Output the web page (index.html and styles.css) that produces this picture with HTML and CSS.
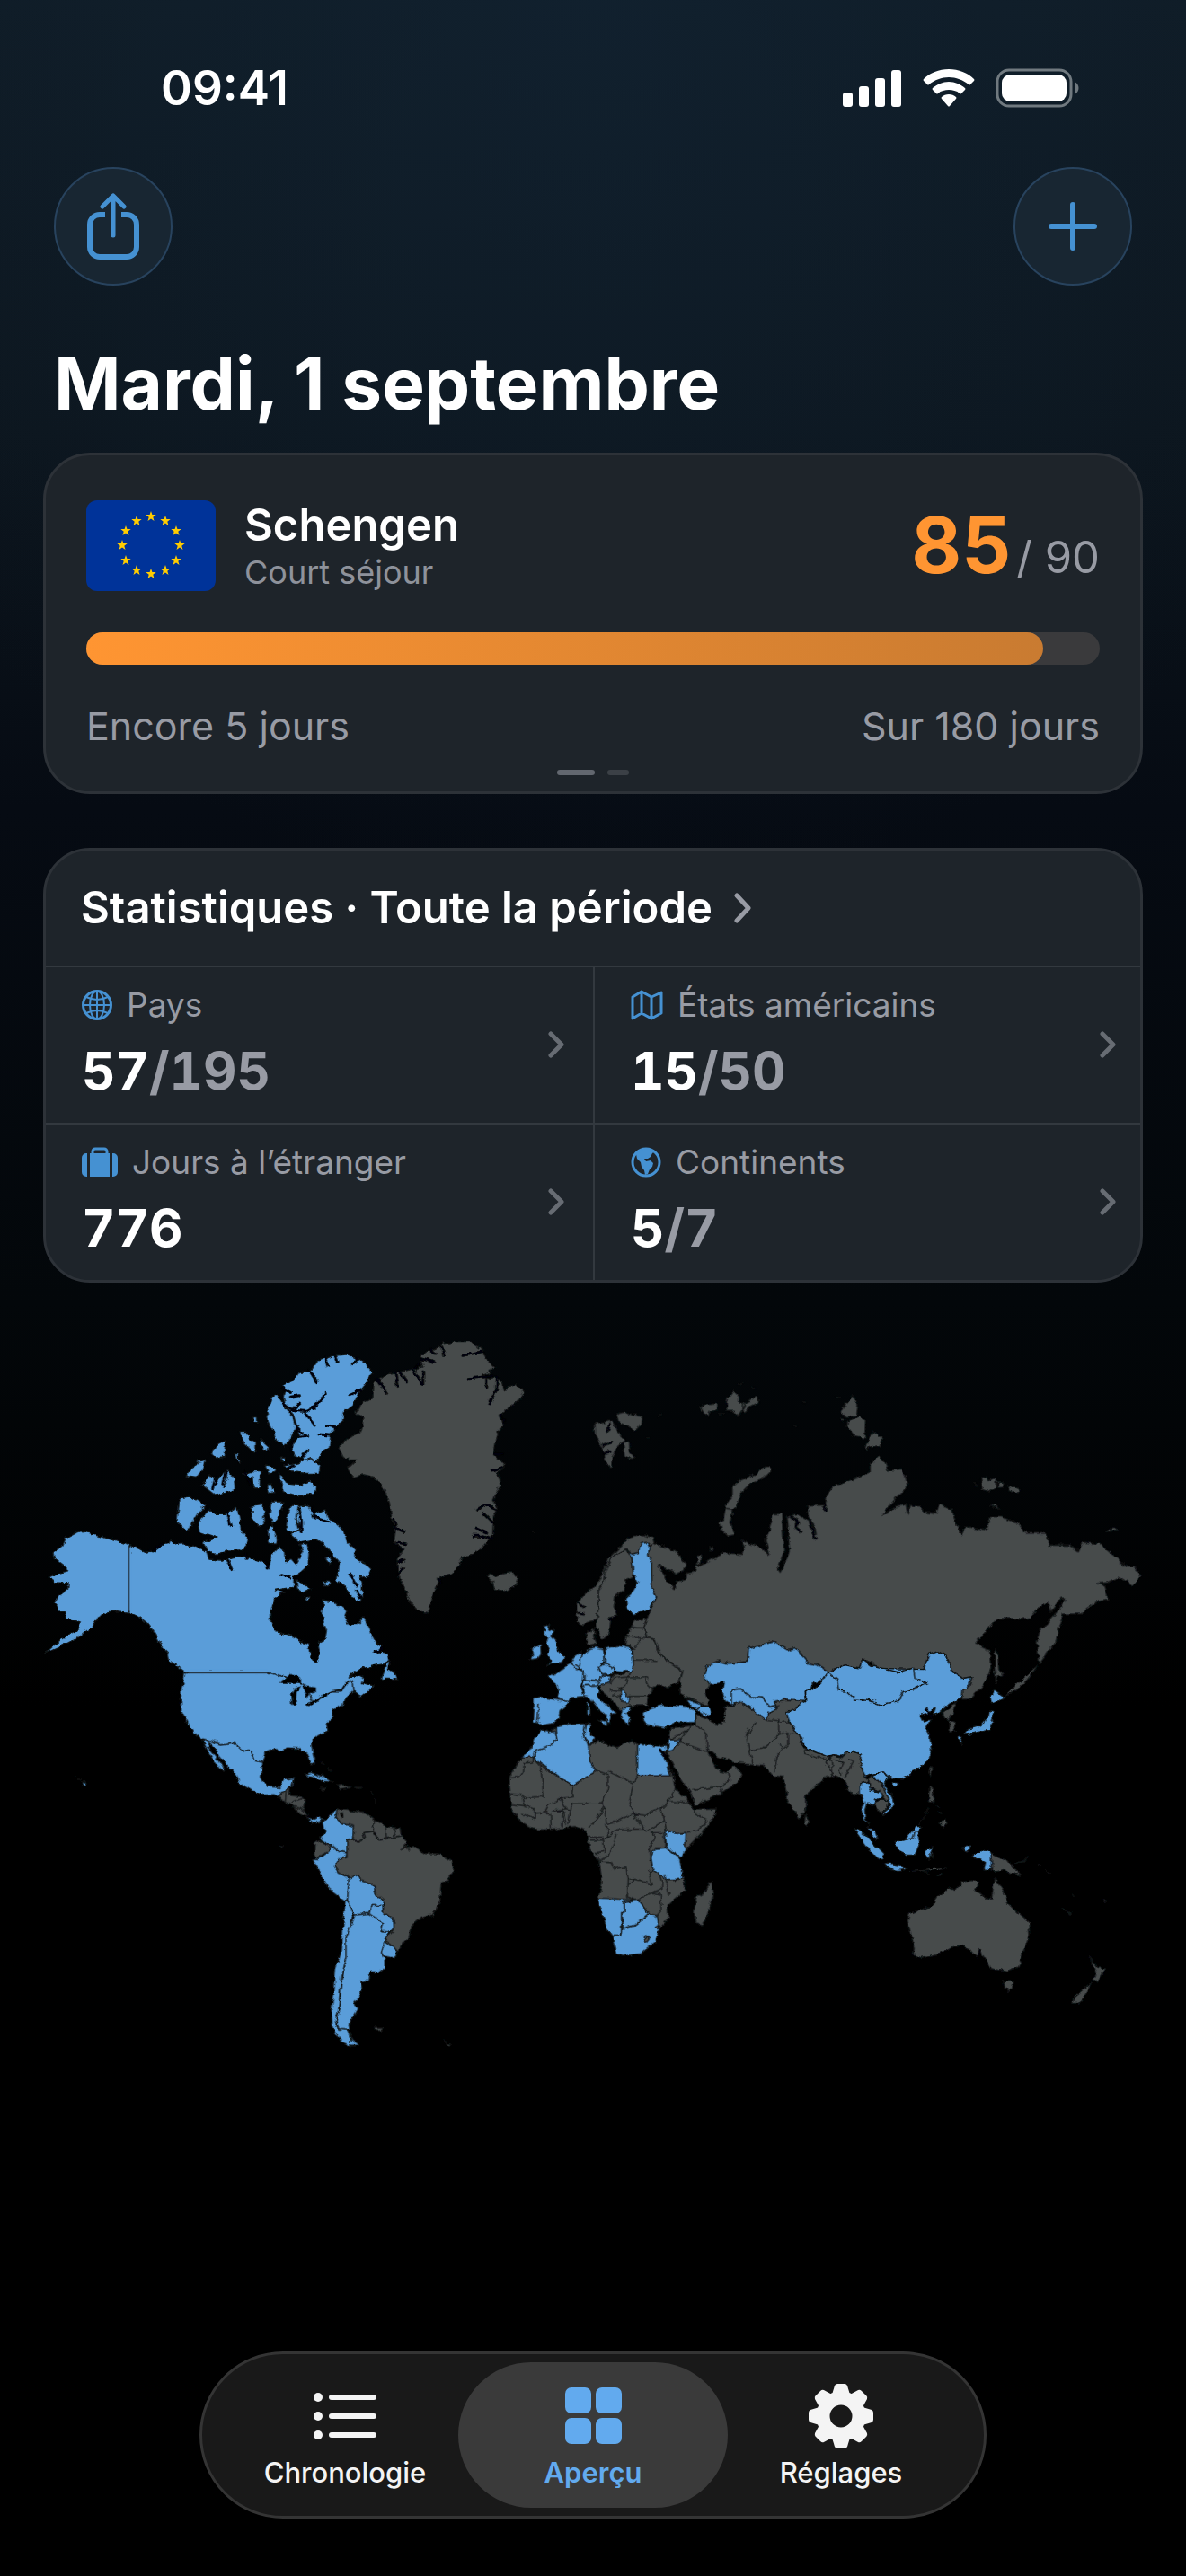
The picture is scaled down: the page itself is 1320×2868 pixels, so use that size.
FILE: index.html
```html
<!DOCTYPE html>
<html lang="fr">
<head>
  <meta charset="UTF-8" />
  <meta name="viewport" content="width=device-width, initial-scale=1.0" />
  <title>Aperçu</title>
  <link rel="stylesheet" href="styles.css">
</head>
<body>
  <div class="status-bar">
    <span class="clock">09:41</span>
    <div class="status-icons">
      <svg width="66" height="42" viewBox="0 0 66 42" fill="#fff" aria-hidden="true">
        <rect x="0" y="26" width="11" height="16" rx="3"/>
        <rect x="18" y="19" width="11" height="23" rx="3"/>
        <rect x="36" y="10" width="11" height="32" rx="3"/>
        <rect x="54" y="1" width="11" height="41" rx="3"/>
      </svg>
      <svg width="58" height="42" viewBox="0 0 58 42" fill="#fff" aria-hidden="true">
        <path d="M29 0C18 0 8 4 1 11q-1 1 0 2l4 4q1 1 2 0C13 12 21 9 29 9s16 3 22 8q1 1 2 0l4-4q1-1 0-2C50 4 40 0 29 0z"/>
        <path d="M29 14c-7 0-13 3-18 7q-1 1 0 2l4 4q1 1 2 0c3-3 8-4 12-4s9 1 12 4q1 1 2 0l4-4q1-1 0-2c-5-4-11-7-18-7z"/>
        <path d="M29 28c-3 0-6 1-8 3q-1 1 0 2l7 8q1 1 2 0l7-8q1-1 0-2c-2-2-5-3-8-3z"/>
      </svg>
      <svg width="94" height="44" viewBox="0 0 94 44" aria-hidden="true">
        <rect x="2" y="2" width="82" height="40" rx="13" fill="none" stroke="#70797f" stroke-width="3"/>
        <rect x="7" y="7" width="72" height="30" rx="9" fill="#fff"/>
        <path d="M88 15c6 3 6 11 0 14z" fill="#70797f"/>
      </svg>
    </div>
  </div>

  <div class="toolbar">
    <button class="btn-round" type="button" aria-label="Partager">
      <svg width="60" height="76" viewBox="0 0 60 76" fill="none" stroke="#4591d2" stroke-width="6" stroke-linecap="round" stroke-linejoin="round">
        <path d="M21 25h-6a11 11 0 0 0-11 11v25a11 11 0 0 0 11 11h30a11 11 0 0 0 11-11V36a11 11 0 0 0-11-11h-6" stroke-linecap="butt"/>
        <path d="M30 48V5M18 16L30 4l12 12" stroke-width="5"/>
      </svg>
    </button>
    <button class="btn-round" type="button" aria-label="Ajouter">
      <svg width="54" height="54" viewBox="0 0 54 54" stroke="#4591d2" stroke-width="6" stroke-linecap="round">
        <path d="M27 3v48M3 27h48"/>
      </svg>
    </button>
  </div>

  <h1>Mardi, 1 septembre</h1>

  <section class="card zone">
    <div class="zone-head">
      <svg class="flag" viewBox="0 0 144 101" aria-hidden="true">
        <defs>
          <path id="star" d="M0-6L1.4-1.9 5.7-1.9 2.3 .7 3.5 4.9 0 2.4-3.5 4.9-2.3 .7-5.7-1.9-1.4-1.9z"/>
        </defs>
        <rect width="144" height="101" fill="#003399"/>
        <g fill="#ffcc00">
          <use href="#star" x="72" y="18"/>
          <use href="#star" x="88" y="23"/>
          <use href="#star" x="100" y="34"/>
          <use href="#star" x="104" y="50"/>
          <use href="#star" x="100" y="67"/>
          <use href="#star" x="88" y="78"/>
          <use href="#star" x="72" y="82"/>
          <use href="#star" x="56" y="78"/>
          <use href="#star" x="44" y="67"/>
          <use href="#star" x="40" y="50"/>
          <use href="#star" x="44" y="34"/>
          <use href="#star" x="56" y="23"/>
        </g>
      </svg>
      <div class="zone-name">
        <h2>Schengen</h2>
        <p>Court séjour</p>
      </div>
      <div class="zone-count"><strong>85</strong><span>/ 90</span></div>
    </div>
    <div class="progress" role="progressbar" aria-valuenow="85" aria-valuemin="0" aria-valuemax="90" aria-label="Jours utilisés">
      <div class="progress-fill" style="width: 94.4%"></div>
    </div>
    <div class="zone-foot">
      <span>Encore 5 jours</span>
      <span>Sur 180 jours</span>
    </div>
    <div class="pager"><i class="on"></i><i></i></div>
  </section>

  <section class="card stats">
    <a class="stats-head" href="#stats">
      <h2>Statistiques · Toute la période</h2>
      <svg width="20" height="34" viewBox="0 0 20 34"><path d="M3 3l13 14L3 31"/></svg>
    </a>
    <div class="stats-grid">
      <a class="tile" href="#pays">
        <div>
          <div class="tile-label">
            <svg width="34" height="34" viewBox="0 0 34 34" fill="none" stroke="#4591d2" stroke-width="2">
              <circle cx="17" cy="17" r="15.5" stroke-width="3"/>
              <ellipse cx="17" cy="17" rx="8" ry="15.5"/>
              <path d="M17 2v30M2 17h30M5 8q12 6 24 0M5 26q12-6 24 0"/>
            </svg>
            <span>Pays</span>
          </div>
          <p class="tile-value">57<span>/195</span></p>
        </div>
        <svg class="chevron" width="18" height="30" viewBox="0 0 18 30"><path d="M3 3l12 12L3 27"/></svg>
      </a>
      <a class="tile" href="#etats">
        <div>
          <div class="tile-label">
            <svg width="36" height="34" viewBox="0 0 36 34" fill="none" stroke="#4591d2" stroke-width="3" stroke-linejoin="round">
              <path d="M2 8l10-6 11 6 11-5v23l-11 6-11-6-10 6zM12 2v24M23 8v24"/>
            </svg>
            <span>États américains</span>
          </div>
          <p class="tile-value">15<span>/50</span></p>
        </div>
        <svg class="chevron" width="18" height="30" viewBox="0 0 18 30"><path d="M3 3l12 12L3 27"/></svg>
      </a>
      <a class="tile" href="#jours">
        <div>
          <div class="tile-label">
            <svg width="40" height="34" viewBox="0 0 40 34" fill="#4591d2">
              <path d="M6 7v26H5a5 5 0 0 1-5-5V12a5 5 0 0 1 5-5zM34 7v26h1a5 5 0 0 0 5-5V12a5 5 0 0 0-5-5zM9 7h22v26H9z"/>
              <path d="M12 8V5a3 3 0 0 1 3-3h10a3 3 0 0 1 3 3v3" fill="none" stroke="#4591d2" stroke-width="3"/>
            </svg>
            <span>Jours à l’étranger</span>
          </div>
          <p class="tile-value">776</p>
        </div>
        <svg class="chevron" width="18" height="30" viewBox="0 0 18 30"><path d="M3 3l12 12L3 27"/></svg>
      </a>
      <a class="tile" href="#continents">
        <div>
          <div class="tile-label">
            <svg width="34" height="34" viewBox="0 0 34 34">
              <circle cx="17" cy="17" r="15" fill="none" stroke="#4591d2" stroke-width="3"/>
              <path d="M6 8C10 2 20 0 27 5l-3 2-2 4-3 2h-4l2 3 5-1 3 3-1 4-3 3-2 5-3 1-1-5-3-4-1-5-4-4z" fill="#4591d2"/>
            </svg>
            <span>Continents</span>
          </div>
          <p class="tile-value">5<span>/7</span></p>
        </div>
        <svg class="chevron" width="18" height="30" viewBox="0 0 18 30"><path d="M3 3l12 12L3 27"/></svg>
      </a>
    </div>
  </section>

  <svg class="map" viewBox="0 0 3960 2550" role="img" aria-label="Carte des pays visités">
    <defs>
      <filter id="coast" filterUnits="userSpaceOnUse" x="0" y="0" width="3960" height="2550">
        <feTurbulence type="fractalNoise" baseFrequency="0.045" numOctaves="3" seed="4" result="n"/>
        <feDisplacementMap in="SourceGraphic" in2="n" scale="17" xChannelSelector="R" yChannelSelector="G"/>
      </filter>
    </defs>

    <g filter="url(#coast)">
      <!-- Canada, Alaska -->
      <g class="seen" transform="translate(120 0)">
        <path d="M310 745L335 752 365 768 385 765 415 745 440 740 448 722 460 745 490 740 530 748 570 765 578 792 620 795 655 785 700 782 755 800 775 815 782 780 810 750 830 765 832 800 852 790 868 808 890 770 880 745 905 740 915 770 912 810 885 835 862 850 860 885 800 895 828 902 800 920 785 960 785 1000 803 1035 850 1045 880 1065 908 1072 915 1110 935 1140 945 1125 945 1095 940 1070 965 1058 970 1030 958 1000 955 985 958 930 990 935 1020 950 1038 965 1030 985 1045 1010 1070 1010 1095 985 1110 1015 1118 1040 1135 1070 1160 1085 1140 1100 1175 1105 1182 1130 1160 1142 1110 1152 1070 1165 1045 1185 1075 1180 1095 1190 1090 1205 1130 1215 1085 1250 1060 1235 1055 1200 1040 1198 1020 1228 990 1232 960 1245 925 1270 905 1270 900 1215 870 1205 830 1185 795 1178 780 1171 497 1171 470 1150 445 1130 440 1105 420 1085 405 1055 390 1030 370 1005 345 985 310 970z"/>
        <path d="M880 615L905 610 930 640 965 625 975 650 1005 675 1030 700 1040 735 1065 755 1065 790 1100 805 1120 825 1105 855 1080 845 1090 880 1088 935 1050 915 1030 880 1000 860 1010 830 1012 800 985 770 960 740 935 725 880 735 850 710 885 690 870 650z"/>
        <path d="M850 612L878 612 868 650 880 690 860 705 835 690 838 645z"/>
        <path d="M575 625L600 640 640 640 670 615 680 650 685 690 710 725 705 745 680 765 640 765 600 775 575 765 560 735 605 720 545 700 540 670 565 640z"/>
        <path d="M480 590L515 585 545 595 568 612 540 640 525 665 515 690 498 695 470 665z"/>
        <path d="M940 130L990 112 1035 108 1080 125 1105 140 1123 165 1110 195 1080 235 1060 275 1030 300 1025 330 1000 350 985 375 980 420 955 435 945 465 900 462 865 445 850 415 880 380 870 345 860 310 835 285 825 250 830 225 820 210 860 195 880 165 915 165z"/>
        <path d="M795 242L815 255 835 290 858 318 868 350 855 380 830 415 805 395 795 370 775 330 770 300z"/>
        <path d="M830 480L880 470 915 455 950 480 945 505 905 505 850 500z"/>
        <path d="M810 500L840 540 880 545 915 530 935 550 930 575 880 580 825 570z"/>
        <path d="M555 545L580 510 600 530 640 495 665 525 668 560 640 568 600 580z"/>
        <path d="M500 515L540 465 568 460 560 490 535 520z"/>
        <path d="M680 365L700 365 715 390 735 400 735 435 715 425 690 400zM585 440L600 410 630 395 632 415 628 450 605 458zM750 390L778 415 775 435 755 425zM690 510L720 500 750 500 748 555 730 555 722 520zM765 480L800 485 795 500 775 505zM770 545L785 540 795 570 780 572zM728 320l12 0 0 15 -10 0zM665 440l8 0 10 28 -8 0zM820 450l12 0 0 14 -10 0z"/>
        <path d="M785 600L825 600 815 640 790 675 780 640zM720 615L760 610 762 680 740 685 720 650zM772 690L790 680 805 720 800 742 778 738z"/>
        <path d="M870 862L905 880 920 890 890 902 872 890zM958 865L985 868 970 885zM965 790L988 785 982 810zM895 915l18 5 -8 12z"/>
        <path d="M1170 1140L1182 1132 1175 1160 1198 1170 1208 1198 1180 1192 1150 1192 1160 1165z"/>
        <path d="M310 745L270 732 225 718 195 710 155 697 130 706 100 722 88 750 56 770 60 790 90 812 112 830 75 838 42 852 65 870 108 872 106 892 75 915 60 940 80 965 95 965 100 990 148 1002 140 1025 80 1062 28 1108 95 1078 150 1048 190 1015 210 985 240 968 270 965 310 970z"/>
      </g>
      <g class="sea-line" transform="translate(120 0)">
        <path d="M825 270Q850 300 905 298 945 280 966 235M895 300L930 345M880 270L850 300M850 250L880 245M913 160L938 200M965 120L975 148M1000 112L1008 132M1085 225L1050 242M1075 120L1060 140M820 220L850 235M870 350L905 382 880 385M858 395L850 430M905 430L885 458M1000 350L975 345M945 375L980 378M920 620L930 650 975 665M640 640L652 680M880 625Q890 660 885 700M640 795L655 830M700 770L705 790M768 800L772 825M600 520L590 555M635 505L625 550M700 500L712 540M840 490L860 480M1050 840L1070 880M1070 895L1085 920M1160 1090L1135 1102M390 765L425 740M820 845L850 855"/>
      </g>

      <!-- USA, Mexico, Central and South America -->
      <g transform="translate(120 1140)">
        <g class="seen">
          <path d="M497 31L780 31 830 45 900 72 925 130 960 108 990 92 1020 92 1045 55 1060 65 1062 95 1030 120 1025 140 995 155 985 185 970 200 975 225 945 240 920 262 925 300 932 335 918 335 905 300 885 285 840 282 820 292 790 290 765 300 755 330 735 325 715 290 695 295 660 265 620 270 580 258 553 252 525 232 505 200 485 160 483 90 490 65z"/>
          <path d="M553 252L580 258 620 270 660 265 695 295 715 290 735 325 755 330 752 380 770 410 815 415 830 388 860 382 855 410 835 425 820 428 808 448 795 438 760 440 720 425 678 400 670 375 640 345 610 310 590 275 578 265 577 282 600 310 620 340 632 362 612 352 590 320 572 290z"/>
          <path d="M893 372L920 363 960 378 992 396 960 394 925 378zM903 514L930 520 945 512 962 520 945 530 925 532z"/>
          <path d="M1010 488L1003 515 1020 535 1060 543 1058 585 1038 590 1038 632 1010 628 985 608 950 590 965 560 958 530 975 510z"/>
          <path d="M985 608L1010 628 1038 632 1035 648 1010 655 997 680 1010 700 1030 705 1045 718 1045 750 1040 790 1030 792 975 750 945 690 922 655 942 655 975 630z"/>
          <path d="M1045 718L1080 708 1085 725 1130 742 1135 770 1160 790 1158 808 1120 808 1112 835 1065 840 1055 830 1040 790z"/>
          <path d="M1120 808L1158 808 1160 832 1195 860 1200 885 1185 895 1152 893 1160 870 1112 838z"/>
          <path d="M1032 792L1040 790 1058 840 1050 880 1035 920 1035 980 1020 1040 1015 1100 1010 1160 1000 1195 1010 1220 1040 1225 1050 1250 1078 1275 1050 1280 1020 1265 990 1220 985 1160 995 1100 1000 1020 1020 960 1025 880z"/>
          <path d="M1065 840L1112 835 1160 870 1152 893 1185 895 1165 925 1155 970 1165 990 1165 1015 1145 1032 1113 1033 1110 1060 1085 1062 1090 1090 1080 1115 1062 1130 1065 1145 1078 1150 1060 1180 1045 1200 1048 1225 1012 1222 1002 1195 1015 1150 1017 1090 1022 1040 1035 980 1035 920 1052 870z"/>
          <path d="M1165 925L1205 950 1203 975 1190 983 1160 978 1153 965zM1050 1230L1055 1255 1082 1275 1050 1275z"/>
          <circle cx="162" cy="401" r="6"/>
        </g>
        <g class="rest">
          <path d="M808 448L820 428 835 422 850 415 847 440 890 445 900 455 897 490 908 512 880 500 860 480 830 462z"/>
          <path d="M1005 405L1030 402 1050 412 1015 420zM950 413l22 2 -10 6zM1065 413l22 1 -8 5zM1130 1218l30 0 -6 8 -18 2zM1360 1260l26 10 -6 6zM815 606l14 4 -8 6zM120 375l16 4M140 383l16 8M950 325l14 10M975 345l16 16M1118 425l8 14M1130 450l0 18"/>
          <path d="M1010 488L1040 490 1100 500 1125 515 1135 525 1125 560 1095 565 1100 585 1075 597 1058 585 1060 543 1020 535 1003 515z"/>
          <path d="M1130 520L1170 545 1215 550 1220 575 1190 582 1145 590 1135 565 1125 560z"/>
          <path d="M945 592L985 608 975 630 955 640 942 655 928 640 930 600z"/>
          <path d="M1038 590L1058 585 1075 597 1100 585 1095 565 1125 560 1145 590 1190 582 1220 575 1238 595 1230 615 1260 610 1300 635 1345 635 1390 660 1395 690 1375 725 1353 735 1350 790 1325 840 1285 850 1255 875 1250 910 1225 935 1210 962 1195 945 1165 925 1195 890 1195 860 1160 832 1160 790 1135 770 1130 742 1085 725 1080 708 1050 718 1030 705 1010 700 997 680 1010 655 1038 648z"/>
        </g>
        <path class="border" d="M835 425L833 460M850 465L890 450M862 478L895 488M1168 545L1170 585M1200 550L1195 580M1215 625L1235 610 1245 628"/>
        <path class="sea" d="M812 65L850 35 885 50 885 65 850 65zM860 85L885 75 870 100 868 135 855 135 852 100zM890 75L935 80 935 98 912 100 905 122zM900 138L940 118 945 125 915 142zM945 108L975 100 970 112 945 116zM1015 500l10 -4 2 15 -8 4z"/>
      </g>

      <!-- Greenland, Iceland -->
      <g class="rest" transform="translate(1080 0)">
        <path d="M323 113L345 98 365 92 385 82 400 72 440 65 490 65 530 92 545 125 570 148 555 170 530 178 560 190 580 185 598 200 605 232 620 212 640 205 672 230 650 265 620 285 590 310 600 340 585 365 575 405 570 445 600 470 600 490 580 500 595 545 575 570 565 595 580 620 568 650 565 715 540 745 500 775 465 785 450 815 430 840 390 850 375 890 360 925 350 975 320 965 290 935 270 890 248 840 245 790 270 760 235 735 240 700 228 660 220 600 195 545 170 518 135 510 100 518 80 490 110 460 70 460 50 420 75 390 120 370 135 318 108 305 130 270 165 250 168 205 200 180 250 168 300 155 335 150z"/>
        <path d="M545 850L560 840 575 850 600 840 630 835 650 858 640 880 600 900 570 890 565 870zM695 705l12 -6"/>
      </g>
      <g class="sea-line" transform="translate(1080 0)">
        <path d="M330 205L300 160 318 140M335 205L335 165M240 170L247 215M180 190L212 238M255 165L280 198M325 122L368 133M360 92L375 105M395 80L402 112M465 112L530 98M485 188L565 180M545 190L545 215M580 185L578 225 555 272M590 310L605 330M572 440L595 440M565 495L595 485M512 628L535 610 575 625M535 640L565 670M500 715L530 715 565 725M510 690L545 705M235 660L245 690 270 700M245 735L275 740M250 800L270 795M250 840L268 820M380 855L395 870"/>
      </g>

      <!-- Europe, Russia, Kazakhstan -->
      <g transform="translate(1620 150)">
        <g class="rest">
          <path d="M363 187L385 185 410 180 430 180 440 215 470 240 440 265 425 300 420 343 400 310 395 280 380 250 365 225zM440 155L465 150 490 160 525 165 523 190 500 213 475 200 450 190zM460 255L480 250 485 285 500 300 485 310 465 300z"/>
          <path d="M718 132l25 -6 30 -5 0 25 -20 5 -5 15 -15 -10zM805 115l25 -35 15 15 0 20 25 15 -25 35 -10 -20 -28 0zM860 125l45 -25 12 15 -30 15 -20 20 -10 -5zM845 58l14 -4M888 66l14 4M1060 115l12 4M575 165l18 -6M535 236l18 0M1030 196l12 4M780 160l20 -6"/>
          <path d="M930 335Q955 325 955 345L930 370 880 395 855 420 840 465 825 480 820 520 835 560 810 565 785 540 780 520 795 510 800 480 808 455 825 430 825 400 855 375 900 358zM748 600l14 4 -6 12zM705 630l18 0 -2 28 -12 -4z"/>
          <path d="M305 790L340 750 370 730 390 690 410 640 440 610 480 570 530 560 560 570 565 590 550 600 545 590 525 590 515 620 490 625 470 608 440 625 420 640 400 680 395 720 378 745 380 800 370 845 350 850 325 865 305 850z"/>
          <path d="M440 625L470 608 490 640 495 690 490 700 470 710 465 745 435 765 430 800 440 830 420 840 415 890 390 910 372 870 370 845 380 800 378 745 395 720 400 680 420 640z"/>
          <path d="M337 890L365 870 362 900 375 925 355 932 340 925z"/>
          <path d="M485 870L500 845 540 838 530 870 540 905 568 910 580 950 585 965 600 975 660 1015 650 1050 610 1075 590 1060 560 1070 545 1100 540 1130 480 1132 470 1145 450 1145 420 1110 385 1080 385 1060 415 1050 425 1030 485 1018 495 985 490 935 467 930 470 900z"/>
          <path d="M565 590L600 600 640 620 670 655 665 680 640 690 600 672 578 664 600 692 610 725 635 740 640 715 665 710 672 692 700 685 705 655 718 665 760 640 800 620 860 625 865 600 850 575 880 590 920 600 950 630 935 580 955 520 960 490 990 490 995 560 998 620 978 672 985 682 1008 640 1016 606 1005 500 1040 490 1090 520 1105 560 1100 530 1078 500 1075 465 1135 460 1140 430 1160 400 1200 385 1240 370 1285 350 1285 325 1315 297 1335 320 1345 345 1390 340 1405 370 1410 400 1370 440 1325 495 1370 468 1405 458 1410 492 1416 462 1455 465 1465 485 1505 490 1515 460 1560 475 1570 515 1590 560 1605 530 1660 545 1680 535 1685 500 1720 500 1780 520 1805 555 1875 555 1885 595 1950 595 1980 615 1995 585 2050 590 2100 630 2140 665 2165 665 2190 690 2165 730 2120 700 2080 720 2045 722 2070 732 2080 775 2050 780 2010 805 1990 825 1930 825 1915 870 1905 925 1880 950 1850 990 1842 920 1850 880 1880 850 1915 810 1935 775 1920 775 1890 815 1880 790 1850 800 1825 835 1780 840 1710 840 1680 875 1635 925 1670 940 1685 945 1688 1010 1660 1070 1620 1110 1592 1110 1590 1080 1610 1075 1625 1035 1590 1040 1555 1010 1540 965 1510 948 1480 960 1465 1010 1380 1020 1295 1000 1290 985 1260 975 1250 1005 1200 995 1145 1020 1110 995 1080 990 1055 960 1035 938 1010 945 960 918 880 940 875 985 810 990 780 982 740 1000 730 1030 750 1060 735 1085 750 1130 720 1125 655 1095 650 1050 660 1015 600 975 585 965 568 910 540 905 530 870 540 838 548 815 572 768 558 740 555 690 555 655 545 630 548 600z"/>
        </g>
        <g class="seen">
          <path d="M470 608L490 625 515 620 520 590 540 585 548 600 545 630 555 655 555 690 558 740 572 768 545 810 495 827 472 805 470 770 495 745 510 718 495 690 490 640z"/>
          <path d="M200 865L215 860 212 875 230 880 220 900 235 915 245 945 265 970 255 990 225 992 202 997 222 980 205 965 215 945 205 925 212 905 198 900zM155 940L185 925 187 960 175 975 150 978 160 955z"/>
          <path d="M345 940L370 935 395 940 400 985 378 1000 390 1030 385 1048 330 1045 330 1020 312 1005 315 970 340 950z"/>
          <path d="M400 940L440 930 485 937 493 970 495 1000 485 1018 440 1015 400 995z"/>
          <path d="M378 1000L400 992 435 1010 425 1025 390 1028z"/>
          <path d="M330 1045L385 1048 390 1030 420 1028 415 1052 370 1064 325 1064z"/>
          <path d="M208 1032L240 1020 270 998 285 990 330 1020 328 1045 318 1065 325 1090 330 1100 290 1105 280 1118 240 1110 245 1080 235 1055z"/>
          <path d="M285 990L300 965 322 950 318 985 312 1010z"/>
          <path d="M162 1108L190 1103 280 1118 275 1130 250 1150 245 1175 230 1190 190 1197 160 1188 163 1150z"/>
          <path d="M325 1065L375 1062 380 1085 375 1095 400 1125 440 1155 420 1160 412 1188 402 1182 405 1165 375 1140 345 1100 328 1098zM340 1118l8 0 0 42 -8 0zM375 1178l30 4 -2 16z"/>
          <path d="M448 1070L465 1085 480 1108 475 1122 455 1115 452 1095zM460 1140L490 1135 485 1150 470 1155 487 1175 478 1197 465 1185 455 1160z"/>
          <path d="M525 1155L545 1140 590 1128 640 1130 670 1135 700 1145 705 1187 640 1187 600 1205 540 1195 528 1180z"/>
          <path d="M668 1108L722 1125 715 1142 690 1135zM700 1142L720 1132 750 1132 755 1160 740 1168 720 1155z"/>
          <path d="M730 1030L740 1000 780 982 810 990 875 985 880 940 960 918 1010 945 1035 938 1055 960 1080 990 1110 995 1145 1020 1125 1050 1095 1055 1085 1080 1065 1085 1070 1115 1000 1110 970 1130 950 1135 925 1105 885 1100 850 1075 822 1080 822 1130 800 1115 790 1080 795 1055 750 1060z"/>
          <path d="M822 1080L850 1075 885 1100 925 1105 950 1135 970 1130 985 1145 950 1150 945 1185 920 1170 885 1140 865 1125 835 1125 822 1130z"/>
        </g>
        <path class="sea" d="M540 1130L545 1100 575 1060 600 1078 620 1088 655 1095 675 1115 665 1136 590 1128zM605 1072L640 1055 655 1050 640 1072z"/>
        <path class="border" d="M485 868L530 872M470 900L520 902 540 905M520 905L495 945M495 978L575 980M485 1018L480 1035 430 1040 415 1060M480 1035L530 1035 548 1070 556 1075M530 1035L548 1040M480 1035L465 1065 448 1070M480 1100L540 1100M412 1078L450 1085M425 1095L452 1100M180 1122L175 1190M805 475L828 478M300 990L315 1000M370 1062L380 1050"/>
        <path class="sea-line" d="M1020 500L1045 515 1035 535 1055 550M1085 520L1102 575M1135 460L1135 480M410 215L415 190M395 260L425 250M395 290L420 280M310 790L330 800M312 820L330 822M415 840L435 835"/>
      </g>

      <!-- Africa, Middle East, India -->
      <g transform="translate(1620 1230)">
        <g class="rest">
          <path d="M188 130L215 140 235 120 270 115 335 110 350 115 355 150 350 185 375 165 440 190 490 168 510 180 580 185 600 180 607 200 600 215 625 280 635 330 680 370 695 400 775 395 760 430 720 480 670 530 650 560 655 600 665 635 665 670 610 720 612 760 585 790 570 840 520 880 455 888 440 880 430 830 405 790 375 700 390 640 380 570 345 525 340 470 300 455 230 465 170 465 120 440 85 395 80 290 110 240 150 195 165 160z"/>
          <path d="M755 640L763 670 745 750 725 783 700 775 697 740 705 690 730 675z"/>
          <path d="M612 165L618 125 705 115 703 78 745 95 790 115 800 55 830 50 850 38 885 60 940 100 950 70 975 60 965 38 1000 30 1070 35 1050 55 1010 72 1015 105 1050 150 1060 190 1150 222 1165 250 1160 285 1140 290 1070 350 1070 400 1048 430 1010 370 995 290 960 285 930 250 830 240 760 220 740 195 750 215 775 260 800 275 830 250 860 280 840 310 790 345 700 385 690 350 650 290 605 205z"/>
          <path d="M1068 415l15 20 -5 18 -12 -5z"/>
        </g>
        <g class="seen">
          <path d="M188 132L215 140 235 135 240 165 210 190 165 205 160 222 120 222 155 195 165 160z"/>
          <path d="M235 135L235 122 270 115 335 110 330 145 345 190 350 240 370 270 320 300 290 318 165 230 165 205 215 185 240 165z"/>
          <path d="M335 110L352 113 352 150 365 160 350 188 330 145z"/>
          <path d="M508 180L580 185 603 182 607 200 595 205 620 285 508 285z"/>
          <path d="M600 465L640 478 670 475 668 530 655 560 605 525z"/>
          <path d="M566 527L605 525 650 562 660 630 610 632 560 600 552 560z"/>
          <path d="M373 693L500 700 465 705 465 745 455 745 455 820 425 820 405 790z"/>
          <path d="M465 705L510 700 545 745 500 785 460 795 457 745 465 740z"/>
          <path d="M425 820L455 820 458 795 500 785 545 748 575 752 580 795 570 840 520 880 455 888 440 880z"/>
          <path d="M610 205L612 165 650 165 645 178 630 200z"/>
        </g>
        <path class="rest" d="M528 828l14 -10 8 10 -10 12 -8 0zM568 792l8 -6 4 10 -8 4z"/>
        <path class="sea" d="M745 195L775 222 825 235 820 262 790 268 760 235zM735 5L760 -20 795 -25 790 0 770 15 785 40 802 62 800 105 775 115 755 105 750 70z"/>
        <path class="sea-line" d="M583 198L605 225"/>
        <path class="border" d="M160 222L160 240 130 242 128 270 115 290 82 292M185 252L195 355 130 358M165 230L185 252 295 318 292 355 250 362M85 345L125 350 132 385 85 380M130 388L165 395 165 430 120 410M165 410L200 408 218 410 220 460M200 405L210 385 250 362 270 395 225 402M222 402L258 402 258 455M262 405L270 450M270 395L285 400 278 450M285 400L290 378 390 378 398 392 365 440 345 455M370 270L410 280 410 325 390 378M410 270L495 310 508 285 508 180M495 310L480 380 495 410 445 435 405 445 398 392M405 445L410 490 345 490M410 490L440 465 530 462 495 410M495 410L535 418 590 390 598 435 540 470 530 462M598 435L605 470M590 390L600 390 610 370 635 330M610 370L680 375 700 410 740 435 710 468 640 478M560 475L600 475M555 470L565 490 550 530 560 600M600 475L600 525 566 527M440 480L415 550 380 570 380 555M350 500L395 500 398 540 370 545M380 573L420 575 430 595 470 590 478 628 520 635 555 650 545 605 565 600M478 628L475 690 500 700 510 700M475 650L495 640 495 628M510 700L560 675 585 680 588 735 575 750M560 675L590 665 590 640 580 610M600 615L615 685M510 700L545 745M618 165L680 130 685 110M680 130L650 165M650 172L740 205M705 115L740 150 740 195M690 335L785 320 820 300 815 275 785 270M785 320L792 345M880 125L872 150 880 195 895 245M875 150L905 105M880 200L930 195 980 150 980 95M980 150L1010 140 1010 180 975 220 965 270M1010 140L1050 150M1070 195L1065 210 1150 235M940 100L985 105 1015 105M965 60L985 50M985 180L990 195"/>
      </g>

      <!-- China, Japan, South-East Asia, Oceania -->
      <g transform="translate(2700 1230)">
        <g class="rest">
          <path d="M58 240L85 218 110 225 130 205 155 205 175 215 172 240 190 290 205 300 172 318 182 370 165 345 140 345 120 300 80 285z"/>
          <path d="M200 300L215 285 235 305 250 320 270 360 262 372 245 355 235 335 205 325z"/>
          <path d="M218 375L240 366 268 368 262 395 240 405 225 395z"/>
          <path d="M445 75L495 40 485 75 470 95 450 90zM468 97L490 108 490 135 468 140z"/>
          <path d="M400 275l8 -22 6 4 -8 28zM403 322L418 325 412 350 420 375 400 368zM438 440l20 -15 5 22 -15 12zM425 385l14 6M432 405l16 4M368 450L402 392"/>
          <path d="M610 543L660 565 680 590 710 618 680 612 655 598 630 605 610 605zM690 578L728 566 732 552 722 572zM760 580l20 10M790 595l18 14M850 728l28 20 -10 -2zM985 697l10 4 -8 6zM880 680l6 10M340 604l90 -3 30 -8"/>
          <path d="M335 745L380 730 410 720 430 690 470 660 490 668 510 640 545 635 570 640 555 665 590 690 610 697 620 625 640 655 650 670 665 710 700 745 735 775 738 820 720 870 700 925 660 940 610 930 595 900 580 890 575 865 560 890 540 865 510 852 470 860 430 880 375 893 348 885 352 860 340 810 330 770z"/>
          <path d="M650 970L685 970 680 995 668 1007 655 995zM938 890L965 925 992 930 965 975 950 965 960 940zM945 975L925 1015 905 1045 878 1045 885 1025 920 995z"/>
          <path d="M620 -140L632 -120 635 -70 650 -50 635 -50 625 -20 620 -80zM655 20L700 -5 730 -35 765 -85"/>
          <path d="M145 -985L165 -955 160 -920 130 -910 108 -925 122 -955zM130 -900L170 -915 190 -900 188 -845 150 -850 128 -880zM215 -870L245 -840 238 -815 205 -810 190 -800 200 -840zM102 -910l20 5 -8 8zM90 -980l14 2"/>
          <path d="M575 -710L590 -715 600 -700 625 -710 625 -675 600 -665 580 -670zM630 -698l18 0 0 20 -15 2zM665 -685l40 12 -8 14 -28 -10zM608 -615l15 -8 12 18zM995 -530q20 -20 38 -4zM555 -700l4 18"/>
        </g>
        <g class="seen">
          <path d="M65 -60L170 -75 385 -70 400 -120 430 -132 460 -115 475 -70 510 -40 545 -45 530 -5 512 0 510 25 465 50 440 72 412 85 420 62 375 85 385 105 412 95 390 130 405 155 410 200 395 240 340 280 310 295 275 290 245 272 210 280 190 290 172 240 175 215 155 205 130 205 110 220 85 215 60 220 0 195 -20 180 -30 150 -65 105 -75 75 -10 40 -10 5 15 -5 45 -30z"/>
          <path d="M65 -60L120 -85 170 -75 180 -105 215 -80 300 -60 350 -75 355 -40 395 -25 350 -5 315 5 300 35 240 48 205 35 155 30 130 5 100 0 95 -35z"/>
          <circle cx="290" cy="316" r="9"/>
          <path d="M172 312L195 305 210 330 240 340 245 360 225 365 215 385 195 375 188 400 190 430 205 450 185 435 175 400 185 375 172 345z"/>
          <path d="M215 283L245 272 270 290 250 310 275 345 285 375 275 400 245 420 250 405 270 390 268 360 250 320z"/>
          <path d="M198 458L220 465 232 498 215 490zM148 460L175 470 210 505 250 545 250 570 225 560 195 525 170 490z"/>
          <path d="M253 578L300 585 332 598 300 601 260 592zM432 618l14 -6 -8 10zM380 608l24 2M288 505L320 500 355 455 378 455 365 475 372 510 355 550 325 550 295 535z"/>
          <path d="M390 530L415 525 408 542 418 565 405 548 402 572 390 550zM548 548L575 535 610 543 610 600 585 597 590 575 560 560zM513 525l22 -5 6 10 -16 8z"/>
          <path d="M620 0L655 25 635 35 610 42 606 25zM603 65L618 70 615 95 605 130 560 138 518 145 530 130 565 120 580 110 600 85zM503 150L516 158 510 178 500 162zM528 145l22 0 -14 10z"/>
        </g>
        <path class="border" d="M288 505L320 500 345 495 352 472 375 470M75 220L80 280M85 235L115 240 105 260 110 285M130 230L150 235 140 260 120 290M235 305L250 325"/>
        <path class="sea-line" d="M575 865L565 900M395 62L410 92"/>
      </g>
    </g>

    <!-- straight borders stay crisp -->
    <path class="border-cover" d="M430 752V964M630 1171H892"/>
    <path class="border" d="M430 746V970M618 1171H900"/>
  </svg>

  <nav class="tab-bar">
    <a class="tab" href="#chronologie">
      <svg width="72" height="72" viewBox="0 0 72 72" fill="#f4f4f4" aria-hidden="true">
        <circle cx="6" cy="15" r="5"/><circle cx="6" cy="36" r="5"/><circle cx="6" cy="57" r="5"/>
        <rect x="18" y="12" width="53" height="6" rx="3"/><rect x="18" y="33" width="53" height="6" rx="3"/><rect x="18" y="54" width="53" height="6" rx="3"/>
      </svg>
      <span>Chronologie</span>
    </a>
    <a class="tab active" href="#apercu" aria-current="page">
      <svg width="72" height="72" viewBox="0 0 72 72" fill="#62aaee" aria-hidden="true">
        <rect x="5" y="4" width="29" height="29" rx="7"/><rect x="39" y="4" width="29" height="29" rx="7"/>
        <rect x="5" y="38" width="29" height="29" rx="7"/><rect x="39" y="38" width="29" height="29" rx="7"/>
      </svg>
      <span>Aperçu</span>
    </a>
    <a class="tab" href="#reglages">
      <svg width="72" height="72" viewBox="-36 -36 72 72" fill="#f4f4f4" aria-hidden="true">
        <defs>
          <path id="tooth" d="M-10-24L-7-34q1-2 3-2h8q2 0 3 2L10-24z"/>
        </defs>
        <circle r="20" fill="none" stroke="#f4f4f4" stroke-width="15"/>
        <use href="#tooth"/>
        <use href="#tooth" transform="rotate(45)"/>
        <use href="#tooth" transform="rotate(90)"/>
        <use href="#tooth" transform="rotate(135)"/>
        <use href="#tooth" transform="rotate(180)"/>
        <use href="#tooth" transform="rotate(225)"/>
        <use href="#tooth" transform="rotate(270)"/>
        <use href="#tooth" transform="rotate(315)"/>
      </svg>
      <span>Réglages</span>
    </a>
  </nav>
</body>
</html>
```
FILE: styles.css
```css
* {
  box-sizing: border-box;
}

body {
  font-family: Inter, 'Liberation Sans', sans-serif;
  background: radial-gradient(ellipse 75% 1000px at 50% 0, rgba(18, 36, 52, 0.6), transparent),
    linear-gradient(#0f1b25 0, #0c151d 480px, #060b13 900px, #03070a 1450px, #000 1900px);
  background-color: #000;
  margin: 0;
  min-height: 100vh;
  display: flex;
  flex-direction: column;
  color: #fff;
}

h1, h2, p {
  margin: 0;
}

a {
  color: inherit;
  text-decoration: none;
}

.status-bar {
  display: flex;
  justify-content: space-between;
  align-items: center;
  padding: 68px 118px 0 179px;
}

.clock {
  font-size: 53px;
  line-height: 60px;
  font-weight: 600;
}

.status-icons {
  display: flex;
  align-items: center;
  gap: 23px;
}

.toolbar {
  display: flex;
  justify-content: space-between;
  padding: 58px 60px 0;
}

.btn-round {
  width: 132px;
  height: 132px;
  display: flex;
  align-items: center;
  justify-content: center;
  padding: 0;
  border-radius: 50%;
  border: 2px solid #28435e;
  background: #182632;
  cursor: pointer;
}

h1 {
  font-size: 80px;
  line-height: 100px;
  font-weight: 700;
  padding: 59px 60px 27px;
}

.card {
  margin: 0 48px;
  border: 3px solid #2d3238;
  border-radius: 52px;
  background: #1e242a;
}

h2 {
  font-size: 49px;
  line-height: 60px;
  font-weight: 600;
}

/* Schengen card */
.zone {
  padding: 48px 45px 18px;
}

.zone-head {
  display: flex;
  align-items: center;
  gap: 32px;
}

.flag {
  width: 144px;
  height: 101px;
  border-radius: 12px;
}

.zone-name {
  flex: 1;
}

.zone-name p {
  font-size: 36px;
  line-height: 44px;
  color: #8e929b;
}

.zone-count {
  display: flex;
  align-items: baseline;
  gap: 6px;
  font-size: 49px;
  line-height: 48px;
  color: #989ba4;
}

.zone-count strong {
  font-size: 86px;
  line-height: 80px;
  font-weight: 700;
  color: #ff9532;
}

.progress {
  height: 36px;
  margin-top: 45px;
  border-radius: 18px;
  background: #3a3a3c;
}

.progress-fill {
  height: 100%;
  border-radius: 18px;
  background: linear-gradient(90deg, #ff9532, #c97b31);
}

.zone-foot {
  display: flex;
  justify-content: space-between;
  margin-top: 41px;
  font-size: 43px;
  line-height: 54px;
  color: #989ba4;
}

.pager {
  display: flex;
  justify-content: center;
  gap: 14px;
  margin-top: 22px;
}

.pager i {
  width: 24px;
  height: 6px;
  border-radius: 3px;
  background: #3b4046;
}

.pager .on {
  width: 42px;
  background: #62676f;
}

/* Statistics card */
.stats {
  margin-top: 60px;
}

.stats-head {
  display: flex;
  align-items: center;
  gap: 24px;
  padding: 34px 39px;
}

.stats svg path {
  stroke-linecap: round;
}

.stats-head svg,
.chevron {
  fill: none;
  stroke: #989ba4;
  stroke-width: 5px;
  stroke-linejoin: round;
}

.chevron {
  stroke: #676c73;
}

.stats-grid {
  display: grid;
  grid-template-columns: 1fr 1fr;
}

.tile {
  display: flex;
  justify-content: space-between;
  align-items: center;
  padding: 20px 32px 22px 40px;
  border-top: 2px solid #33393f;
}

.tile:nth-child(even) {
  padding-right: 27px;
  border-left: 2px solid #33393f;
}

.tile-label {
  display: flex;
  align-items: center;
  gap: 16px;
  font-size: 37px;
  line-height: 44px;
  color: #989ba4;
}

.tile-value {
  margin-top: 15px;
  font-size: 58px;
  line-height: 72px;
  font-weight: 700;
  font-variant-numeric: tabular-nums;
}

.tile-value span {
  color: #989ba4;
}

/* World map */
.map {
  display: block;
  width: 100%;
  margin-top: 44px;
}

.seen,
.rest {
  stroke: #101314;
  stroke-width: 4px;
  stroke-linejoin: round;
}

.seen {
  fill: #5a9dd9;
}

.rest {
  fill: #474b4c;
}

.border {
  fill: none;
  stroke: #16191a;
  stroke-width: 4px;
}

.border-cover {
  fill: none;
  stroke: #5a9dd9;
  stroke-width: 18px;
}

.sea {
  fill: #020303;
}

.sea-line {
  fill: none;
  stroke: #030507;
  stroke-width: 9px;
  stroke-linecap: round;
  stroke-linejoin: round;
}

/* Bottom tabs */
.tab-bar {
  display: flex;
  align-self: center;
  margin: auto 0 64px;
  padding: 9px 21px;
  border: 3px solid #343434;
  border-radius: 93px;
  background: #191919;
}

.tab {
  width: 276px;
  height: 162px;
  display: flex;
  flex-direction: column;
  align-items: center;
  gap: 9px;
  padding-top: 24px;
  font-size: 31px;
  line-height: 36px;
  font-weight: 500;
  color: #f4f4f4;
}

.tab.active {
  width: 300px;
  margin: 0 -12px;
  border-radius: 81px;
  background: #3a3a3a;
  color: #62aaee;
  font-weight: 600;
}
```
